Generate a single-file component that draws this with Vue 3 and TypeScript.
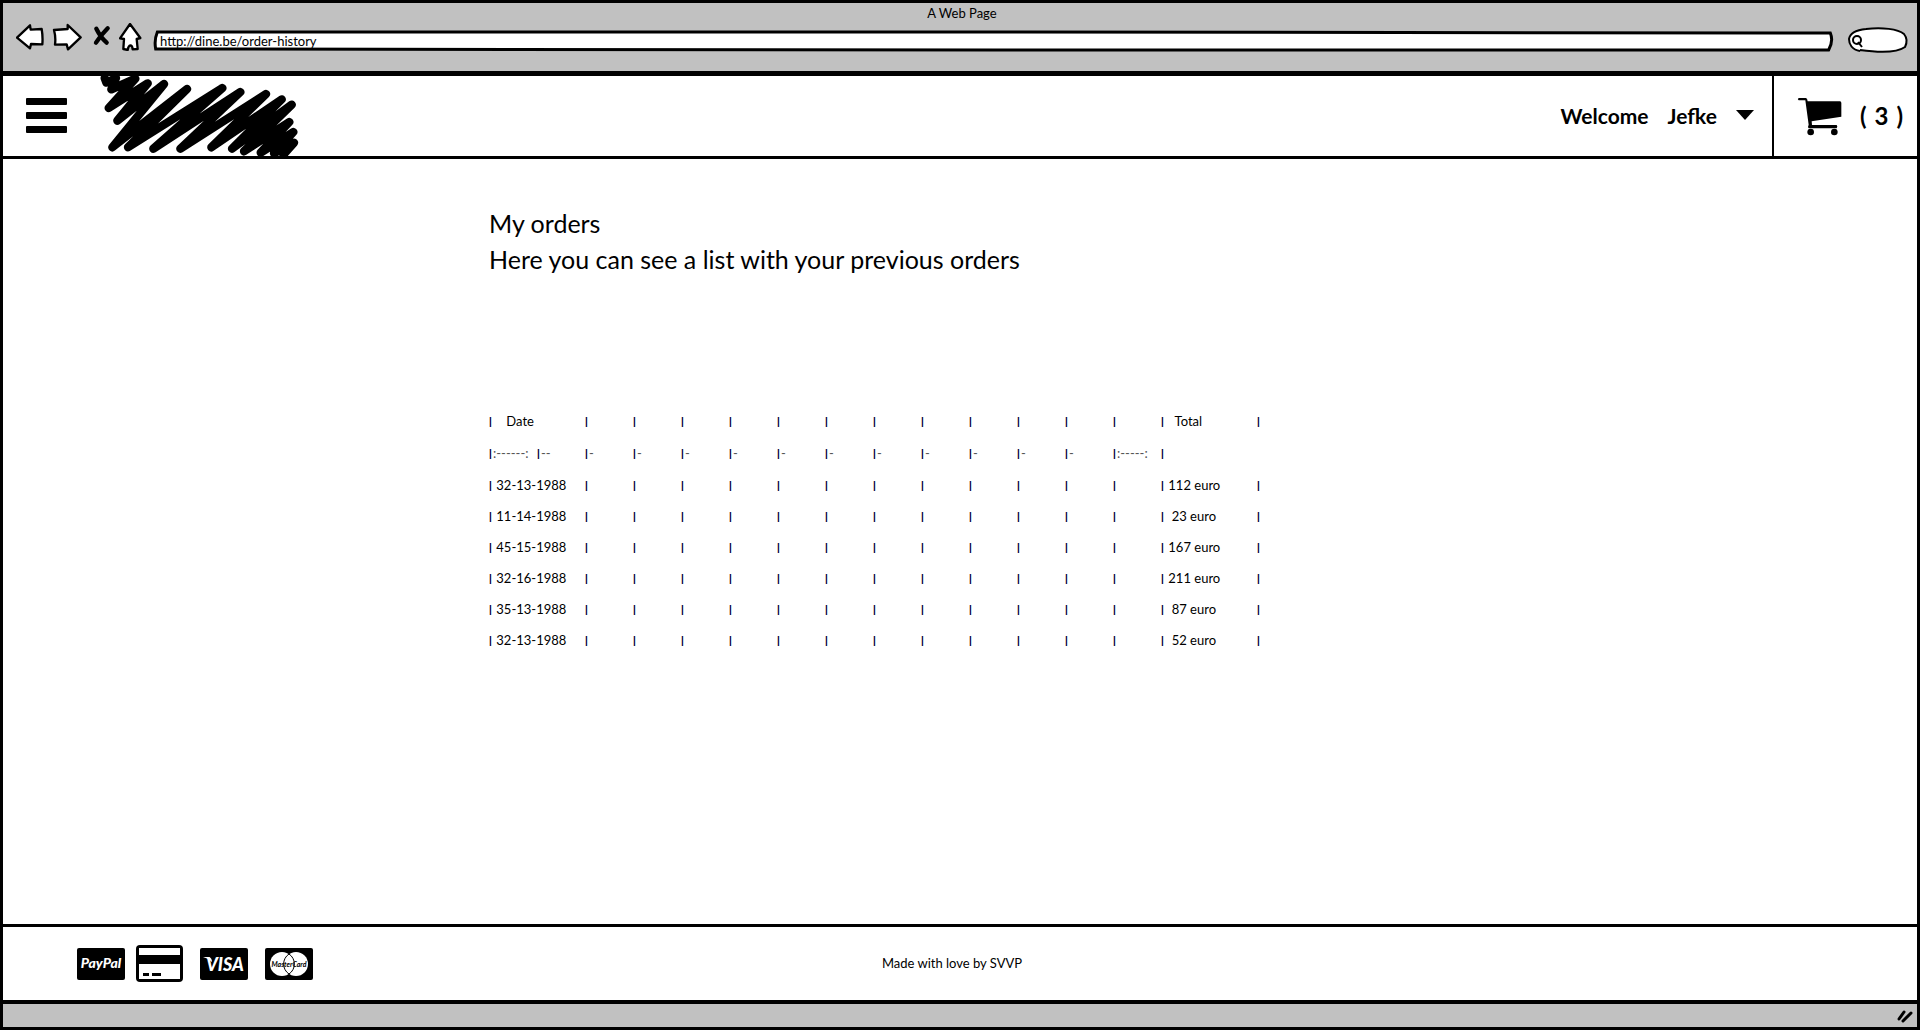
<script setup lang="ts">
import { ref } from 'vue'

interface Cell {
  pipe: boolean
  text: string
}

const address = ref('http://dine.be/order-history')
const query = ref('')

const COLUMNS = 17

function buildRow(first: string, last: string): Cell[] {
  return Array.from({ length: COLUMNS }, (_, i) => ({
    pipe: i !== 1 && i !== 15,
    text: i === 0 ? first : i === 14 ? last : '',
  }))
}

const header = buildRow('    Date', '   Total')

const divider: Cell[] = Array.from({ length: COLUMNS }, (_, i) => ({
  pipe: i < 15,
  text: i === 0 ? ':------:' : i === 1 ? '--' : i < 13 ? '-' : i === 13 ? ':-----:' : '',
}))

const orders = [
  { date: '32-13-1988', total: ' 112 euro' },
  { date: '11-14-1988', total: '  23 euro' },
  { date: '45-15-1988', total: ' 167 euro' },
  { date: '32-16-1988', total: ' 211 euro' },
  { date: '35-13-1988', total: '  87 euro' },
  { date: '32-13-1988', total: '  52 euro' },
]

const rows = orders.map((o) => buildRow(' ' + o.date, o.total))
</script>

<template>
  <div class="window">
    <div class="chrome">
      <div class="title">A Web Page</div>
      <div class="toolbar">
        <button class="tool" aria-label="Back">
          <svg width="28" height="28" viewBox="48 69 84 84">
            <path d="M51 113 L90 76 L92 89 L125 87 Q129 110 127 133 L93 132 L90 145 Z" />
          </svg>
        </button>
        <button class="tool" aria-label="Forward">
          <svg width="30" height="28" viewBox="156 69 90 84">
            <path d="M162 90 L203 87 L203 75 L242 112 L204 148 L200 133 L165 134 Q168 112 162 90 Z" />
          </svg>
        </button>
        <button class="tool" aria-label="Stop">
          <svg width="21" height="28" viewBox="270 69 63 84">
            <path class="stop" d="M289 86 Q302 112 320 128 M323 85 Q304 104 288 128" />
          </svg>
        </button>
        <button class="tool" aria-label="Home">
          <svg width="23" height="28" viewBox="357 69 69 84">
            <path d="M390 72 L421 114 L410 117 L413 147 L398 148 Q397 136 391 136 Q385 137 383 150 L370 147 L372 117 L360 115 Z" />
          </svg>
        </button>
        <div class="address">
          <svg class="outline" viewBox="0 0 1000 20" preserveAspectRatio="none" aria-hidden="true">
            <path d="M2 1 L500 1 L999 2 Q1001 10 998 19 L500 19 L1 18 Q0 9 2 1 Z" />
          </svg>
          <input v-model="address" type="text" aria-label="Address" />
        </div>
        <div class="search">
          <svg class="outline" viewBox="0 0 60 24" aria-hidden="true">
            <path d="M12 24 C4 23 1 17 1 12 C2 6 8 3 18 2 C34 0 50 2 56 7 C60 12 59 16 57 20 C50 25 34 26 12 23" />
            <circle cx="9" cy="13" r="4" />
            <path d="M10 15 L14 20" />
          </svg>
          <input v-model="query" type="text" aria-label="Search" />
        </div>
      </div>
    </div>

    <header class="header">
      <button class="menu" aria-label="Menu">
        <svg width="42" height="36" viewBox="0 0 42 36">
          <rect x="0" y="0" width="41" height="7" rx="1" />
          <rect x="0" y="14" width="41" height="7" rx="1" />
          <rect x="0" y="28" width="41" height="7" rx="1" />
        </svg>
      </button>
      <a class="logo" href="#" aria-label="Dine">
        <svg width="206" height="82" viewBox="0 18 618 246">
          <path
            d="M26 24 L31 38 L60 24 L46 58 L118 26 L38 114 L155 40 L64 152 L204 42 L49 232 L273 57 L96 232 L379 54 L172 236 L433 66 L253 236 L510 72 L346 232 L557 88 L408 236 L587 104 L444 244 L580 156 L494 248 L592 186 L534 250 L594 218 L562 254"
          />
        </svg>
      </a>
      <nav class="account">
        <button class="user">
          <span>Welcome</span>
          <span>Jefke</span>
          <svg width="18" height="10" viewBox="0 0 18 10"><path d="M0 0 H18 L9 10 Z" /></svg>
        </button>
        <a class="cart" href="#" aria-label="Cart">
          <svg width="45" height="39" viewBox="765 293 135 117">
            <path d="M770 296 H792 Q796 297 797 306 H894 Q898 306 898 311 V352 L809 366 L810 377 H884 Q888 381 884 387 H800 Q796 384 800 376 L790 303 H770 Q765 300 770 296 Z" />
            <circle cx="806" cy="398" r="10" />
            <circle cx="877" cy="398" r="10" />
          </svg>
          <span class="count"><span>(</span><span>3</span><span>)</span></span>
        </a>
      </nav>
    </header>

    <main class="main">
      <h1>My orders</h1>
      <p>Here you can see a list with your previous orders</p>
      <table>
        <thead>
          <tr>
            <th v-for="(cell, i) in header" :key="i">
              <span v-if="cell.pipe" class="pipe">|</span>{{ cell.text }}
            </th>
          </tr>
          <tr class="divider">
            <td v-for="(cell, i) in divider" :key="i">
              <span v-if="cell.pipe" class="pipe">|</span>{{ cell.text }}
            </td>
          </tr>
        </thead>
        <tbody>
          <tr v-for="(row, r) in rows" :key="r">
            <td v-for="(cell, i) in row" :key="i">
              <span v-if="cell.pipe" class="pipe">|</span>{{ cell.text }}
            </td>
          </tr>
        </tbody>
      </table>
    </main>

    <footer class="footer">
      <div class="cards">
        <svg width="48" height="32" viewBox="0 0 48 32">
          <rect width="48" height="32" rx="2" />
          <text class="paypal" x="24" y="20">PayPal</text>
        </svg>
        <svg class="credit" width="47" height="38" viewBox="0 0 47 38">
          <rect width="47" height="37" rx="4" />
          <path class="paper" d="M3 3 H44 V10 H3 Z M3 19 H44 V34 H3 Z" />
          <path d="M7 28 H13 V31 H7 Z M16 28 H25 V31 H16 Z" />
        </svg>
        <svg width="48" height="32" viewBox="0 0 48 32">
          <rect width="48" height="32" rx="2" />
          <text class="visa" x="25" y="23">VISA</text>
          <path class="paper" d="M3 9 L9 9 Q12 10 12 14 Q8 10 3 9 Z" />
        </svg>
        <svg width="48" height="32" viewBox="0 0 48 32">
          <rect width="48" height="32" rx="2" />
          <circle class="paper" cx="17" cy="16" r="12" />
          <circle class="paper" cx="31" cy="16" r="12" />
          <path class="lens" d="M24 6 A12 12 0 0 1 24 26 A12 12 0 0 1 24 6" />
          <text class="master" x="24" y="19">MasterCard</text>
        </svg>
      </div>
      <p class="credits">Made with love by SVVP</p>
    </footer>

    <div class="status">
      <svg width="16" height="14" viewBox="0 0 16 14"><path d="M2 10 L7 3 M6 12 L14 4" /></svg>
    </div>
  </div>
</template>

<style>
body {
  margin: 0;
  background: #fff;
}
</style>

<style scoped>
.window {
  box-sizing: border-box;
  min-height: 100vh;
  display: flex;
  flex-direction: column;
  border: 3px solid #000;
  background: #fff;
  color: #000;
  font-family: Lato, "Liberation Sans", sans-serif;
  font-size: 13px;
}

button,
input {
  font: inherit;
  color: inherit;
  background: none;
  border: 0;
  padding: 0;
  margin: 0;
}

a {
  color: inherit;
  text-decoration: none;
}

svg {
  display: block;
}

.chrome {
  background: #c1c1c1;
  border-bottom: 5px solid #000;
  padding: 0 9px 20px 13px;
}

.title {
  text-align: center;
  line-height: 20px;
}

.toolbar {
  display: flex;
  align-items: flex-end;
  gap: 8px;
}

.tool path {
  fill: #fff;
  stroke: #000;
  stroke-width: 7;
  stroke-linejoin: round;
}

.tool .stop {
  fill: none;
  stroke-width: 13;
  stroke-linecap: round;
}

.address,
.search {
  position: relative;
}

.address {
  flex: 1;
  height: 20px;
  margin: 0 8px 0 4px;
}

.search {
  width: 60px;
  height: 24px;
}

.outline {
  position: absolute;
  inset: 0;
  width: 100%;
  height: 100%;
  overflow: visible;
}

.outline path,
.outline circle {
  fill: #fff;
  stroke: #000;
  stroke-width: 2;
  vector-effect: non-scaling-stroke;
}

.address .outline path {
  stroke-width: 3;
}

.address input,
.search input {
  position: relative;
  box-sizing: border-box;
  width: 100%;
  height: 100%;
  outline: none;
}

.address input {
  padding: 0 6px;
}

.search input {
  padding: 0 8px 0 18px;
}

.header {
  display: flex;
  height: 80px;
  border-bottom: 3px solid #000;
}

.menu {
  padding: 0 0 0 23px;
}

.logo {
  margin-left: 28px;
}

.logo svg {
  overflow: visible;
}

.logo path {
  fill: none;
  stroke: #000;
  stroke-width: 25;
  stroke-linecap: round;
  stroke-linejoin: round;
}

.account {
  margin-left: auto;
  display: flex;
  font-weight: 700;
}

.user {
  display: flex;
  align-items: center;
  gap: 19px;
  padding: 0 18px 2px 0;
  font-size: 21px;
}

.cart {
  display: flex;
  align-items: center;
  gap: 18px;
  padding: 0 14px 0 23px;
  border-left: 2px solid #000;
  font-size: 24px;
}

.count {
  display: flex;
  gap: 8px;
  padding-bottom: 2px;
}

.main {
  flex: 1;
  box-sizing: border-box;
  width: 100%;
  max-width: 942px;
  margin: 0 auto;
  padding: 46px 0;
}

h1,
.main p {
  margin: 0;
  font-size: 25px;
  font-weight: 400;
  line-height: 36px;
}

table {
  margin-top: 128px;
  table-layout: fixed;
  width: 816px;
  border-collapse: collapse;
}

th,
td {
  height: 31px;
  padding: 0;
  font-weight: 400;
  text-align: left;
  white-space: pre;
}

thead th,
thead td {
  height: 32px;
}

.pipe {
  display: inline-block;
  width: 4px;
  font-family: "Liberation Sans", sans-serif;
  font-size: 10px;
  font-weight: 700;
  line-height: 10px;
  vertical-align: 1px;
  color: #000040;
}

.divider {
  color: #555;
}

.footer {
  display: grid;
  grid-template-columns: 1fr auto 1fr;
  align-items: center;
  height: 73px;
  padding-right: 16px;
  border-top: 3px solid #000;
  border-bottom: 4px solid #000;
}

.cards {
  display: flex;
  align-items: center;
  gap: 17px;
  padding-left: 74px;
}

.credit {
  margin: 0 0 0 -6px;
}

.paper {
  fill: #fff;
}

.lens {
  fill: none;
  stroke: #000;
  stroke-width: 1;
}

.cards text {
  text-anchor: middle;
  font-weight: 900;
  font-style: italic;
}

.cards .paypal {
  fill: #fff;
  font-size: 14px;
}

.cards .visa {
  fill: #fff;
  font-size: 18px;
}

.cards .master {
  font-size: 7px;
  font-weight: 700;
}

.credits {
  margin: 0;
  padding-bottom: 2px;
}

.status {
  display: flex;
  justify-content: flex-end;
  align-items: center;
  height: 23px;
  padding-right: 4px;
  background: #c1c1c1;
}

.status path {
  fill: none;
  stroke: #000;
  stroke-width: 3;
  stroke-linecap: round;
}
</style>
